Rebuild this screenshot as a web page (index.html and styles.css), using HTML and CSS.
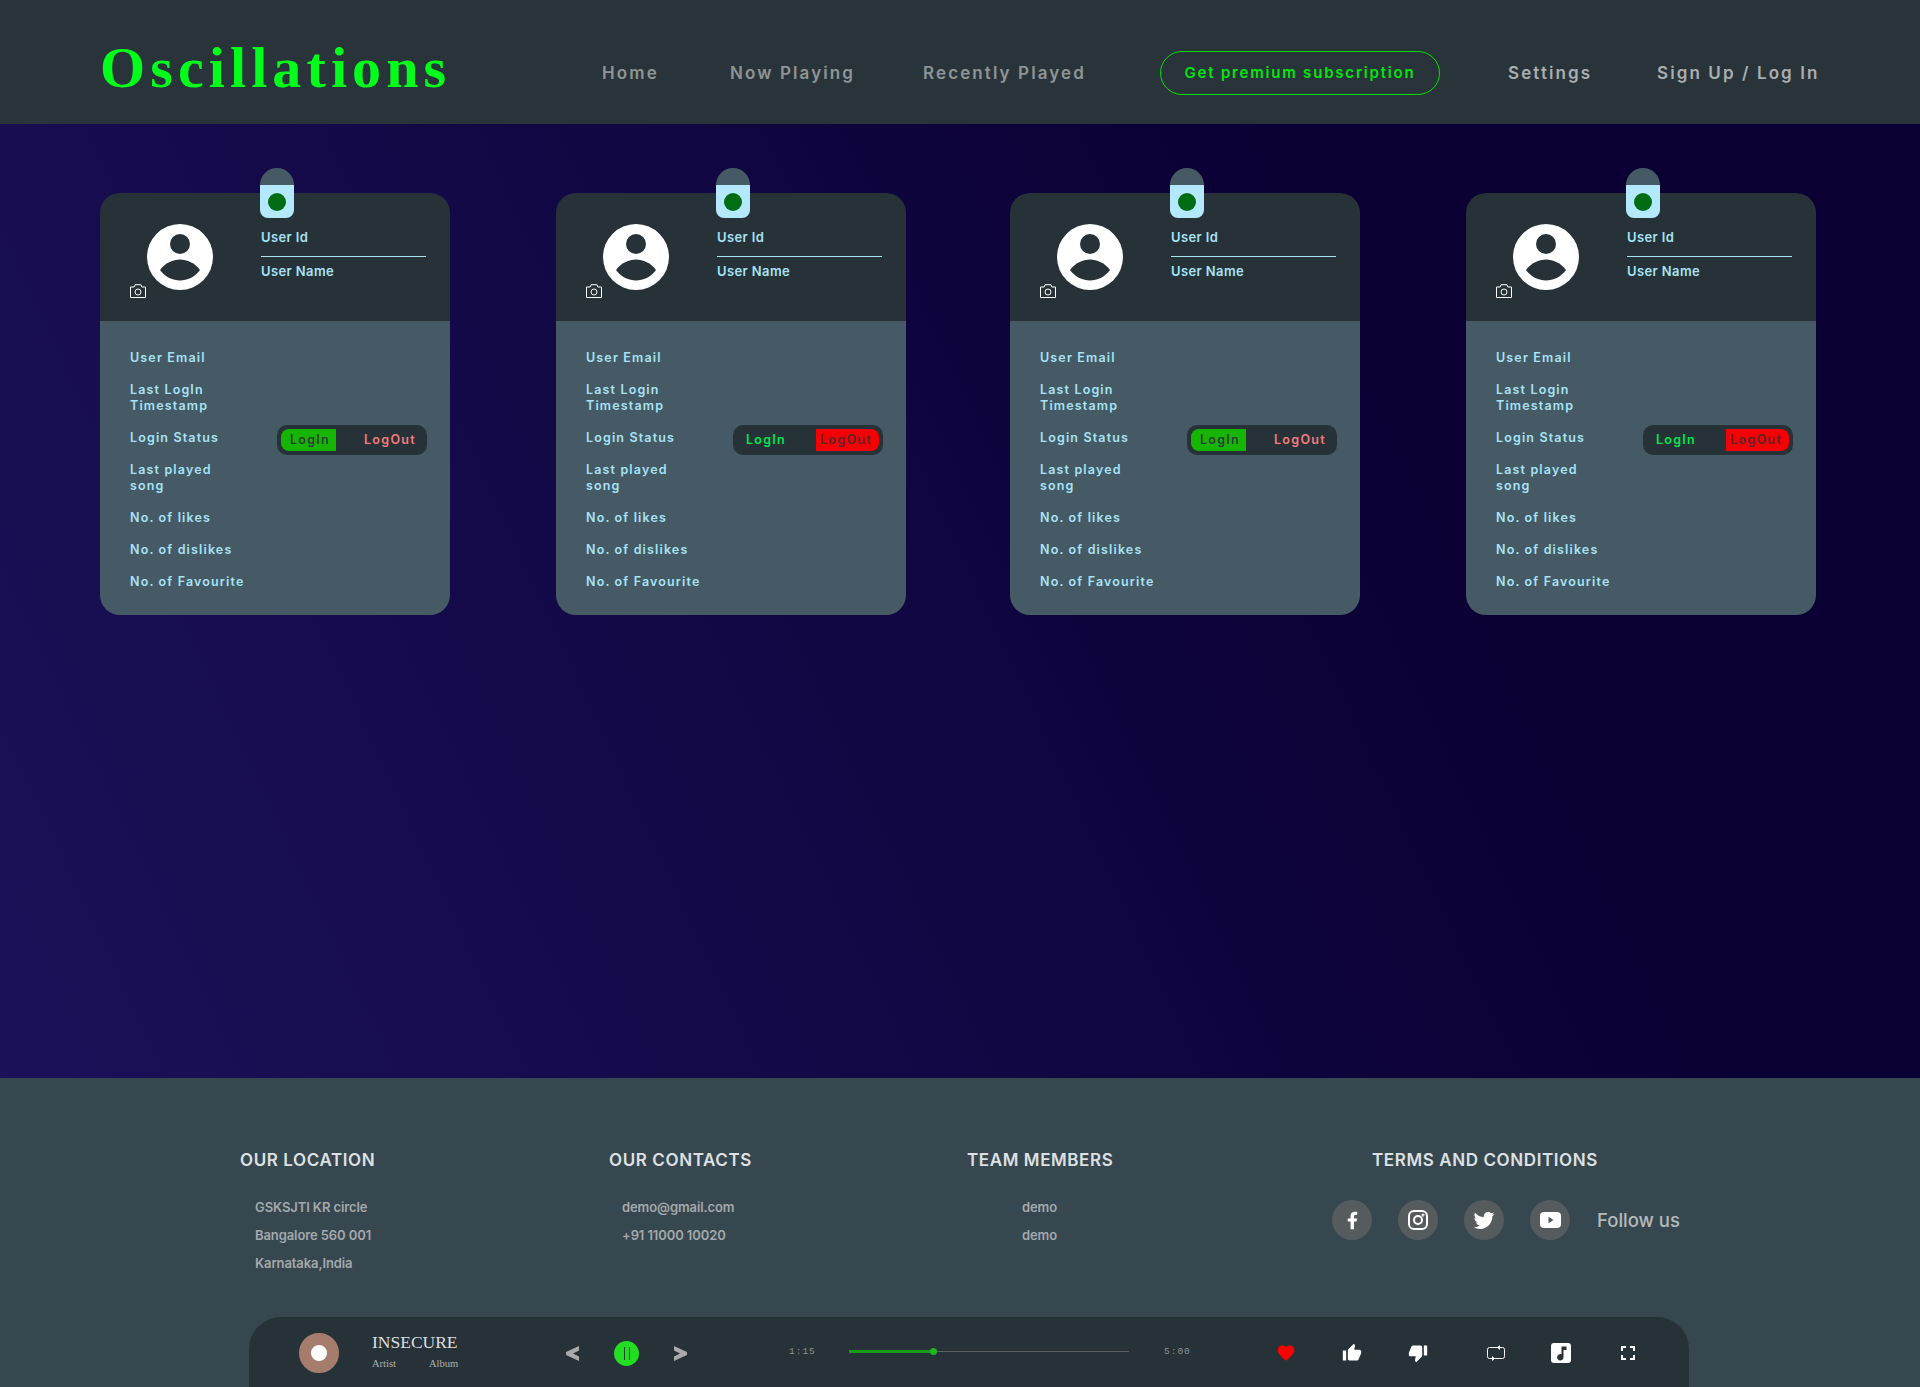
FILE: index.html
```html
<!DOCTYPE html>
<html>
<head>
    <meta charset="utf-8">
    <title>Oscillations</title>
    <link rel="stylesheet" href="styles.css">
</head>
<body>
    <svg class="sprites" width="0" height="0">
        <symbol id="avatar" viewBox="0 0 66 66">
            <circle cx="33" cy="33" r="33" fill="#fff"/>
            <circle cx="33" cy="20" r="10" fill="#263238"/>
            <path fill="#263238" d="M13 46C18 39 26 35.500 33 35.500S48 39 53 46C48 53 40 56.500 33 56.500S18 53 13 46z"/>
        </symbol>
        <symbol id="camera" viewBox="0 0 16 14">
            <path d="M.5 3h3.6l1-2.3h5.8l1 2.3h3.6v10.5H.5z" fill="none" stroke="#fff"/>
            <circle cx="8" cy="8" r="3" fill="none" stroke="#fff"/>
        </symbol>
    </svg>

    <div class="header">
        <div class="logo">Oscillations</div>
        <div class="nav">
            <a class="nav-home">Home</a>
            <a class="nav-now">Now Playing</a>
            <a class="nav-recent">Recently Played</a>
            <a class="premium">Get premium subscription</a>
            <a class="nav-settings light">Settings</a>
            <a class="nav-sign light">Sign Up / Log In</a>
        </div>
    </div>

    <div class="main">
        <div class="card">
            <div class="tab"><span class="tab-dot"></span></div>
            <div class="card-head">
                <div class="photo">
                    <svg class="avatar"><use href="#avatar"/></svg>
                    <svg class="camera"><use href="#camera"/></svg>
                </div>
                <div class="who">
                    <div class="who-id">User Id</div>
                    <div class="who-name">User Name</div>
                </div>
            </div>
            <div class="card-body">
                <div class="row">User Email</div>
                <div class="row">Last LogIn<br>Timestamp</div>
                <div class="row row-status">Login Status
                    <div class="toggle">
                        <span class="login on">LogIn</span>
                        <span class="logout">LogOut</span>
                    </div>
                </div>
                <div class="row">Last played<br>song</div>
                <div class="row">No. of likes</div>
                <div class="row">No. of dislikes</div>
                <div class="row">No. of Favourite</div>
            </div>
        </div>

        <div class="card">
            <div class="tab"><span class="tab-dot"></span></div>
            <div class="card-head">
                <div class="photo">
                    <svg class="avatar"><use href="#avatar"/></svg>
                    <svg class="camera"><use href="#camera"/></svg>
                </div>
                <div class="who">
                    <div class="who-id">User Id</div>
                    <div class="who-name">User Name</div>
                </div>
            </div>
            <div class="card-body">
                <div class="row">User Email</div>
                <div class="row">Last Login<br>Timestamp</div>
                <div class="row row-status">Login Status
                    <div class="toggle">
                        <span class="login">LogIn</span>
                        <span class="logout on">LogOut</span>
                    </div>
                </div>
                <div class="row">Last played<br>song</div>
                <div class="row">No. of likes</div>
                <div class="row">No. of dislikes</div>
                <div class="row">No. of Favourite</div>
            </div>
        </div>

        <div class="card">
            <div class="tab"><span class="tab-dot"></span></div>
            <div class="card-head">
                <div class="photo">
                    <svg class="avatar"><use href="#avatar"/></svg>
                    <svg class="camera"><use href="#camera"/></svg>
                </div>
                <div class="who">
                    <div class="who-id">User Id</div>
                    <div class="who-name">User Name</div>
                </div>
            </div>
            <div class="card-body">
                <div class="row">User Email</div>
                <div class="row">Last Login<br>Timestamp</div>
                <div class="row row-status">Login Status
                    <div class="toggle">
                        <span class="login on">LogIn</span>
                        <span class="logout">LogOut</span>
                    </div>
                </div>
                <div class="row">Last played<br>song</div>
                <div class="row">No. of likes</div>
                <div class="row">No. of dislikes</div>
                <div class="row">No. of Favourite</div>
            </div>
        </div>

        <div class="card">
            <div class="tab"><span class="tab-dot"></span></div>
            <div class="card-head">
                <div class="photo">
                    <svg class="avatar"><use href="#avatar"/></svg>
                    <svg class="camera"><use href="#camera"/></svg>
                </div>
                <div class="who">
                    <div class="who-id">User Id</div>
                    <div class="who-name">User Name</div>
                </div>
            </div>
            <div class="card-body">
                <div class="row">User Email</div>
                <div class="row">Last Login<br>Timestamp</div>
                <div class="row row-status">Login Status
                    <div class="toggle">
                        <span class="login">LogIn</span>
                        <span class="logout on">LogOut</span>
                    </div>
                </div>
                <div class="row">Last played<br>song</div>
                <div class="row">No. of likes</div>
                <div class="row">No. of dislikes</div>
                <div class="row">No. of Favourite</div>
            </div>
        </div>
    </div>

    <div class="footer">
        <div class="footer-cols">
            <div class="col">
                <h4>OUR LOCATION</h4>
                <ul class="list-location">
                    <li>GSKSJTI KR circle</li>
                    <li>Bangalore 560 001</li>
                    <li>Karnataka,India</li>
                </ul>
            </div>
            <div class="col">
                <h4>OUR CONTACTS</h4>
                <ul class="list-contacts">
                    <li>demo@gmail.com</li>
                    <li>+91 11000 10020</li>
                </ul>
            </div>
            <div class="col">
                <h4>TEAM MEMBERS</h4>
                <ul class="list-team">
                    <li>demo</li>
                    <li>demo</li>
                </ul>
            </div>
            <div class="col">
                <h4 class="terms">TERMS AND CONDITIONS</h4>
                <div class="social">
                    <span class="social-btn">
                        <svg width="11" height="19" viewBox="0 0 320 512"><path fill="#fff" d="M279.14 288l14.22-92.66h-88.91v-60.13c0-25.35 12.42-50.06 52.24-50.06h40.42V6.26S260.43 0 225.36 0c-73.22 0-121.08 44.38-121.08 124.72v70.62H22.89V288h81.39v224h100.17V288z"/></svg>
                    </span>
                    <span class="social-btn">
                        <svg width="20" height="20" viewBox="0 0 20 20" fill="none" stroke="#fff" stroke-width="2"><rect x="1" y="1" width="18" height="18" rx="5"/><circle cx="10" cy="10" r="4"/><circle cx="15" cy="5" r=".5"/></svg>
                    </span>
                    <span class="social-btn">
                        <svg width="24" height="24" viewBox="0 0 24 24"><path fill="#fff" d="M22.46 6c-.77.35-1.6.58-2.46.69.88-.53 1.56-1.37 1.88-2.38-.83.5-1.75.85-2.72 1.05C18.37 4.5 17.26 4 16 4c-2.35 0-4.27 1.92-4.27 4.29 0 .34.04.67.11.98C8.28 9.09 5.11 7.38 3 4.79c-.37.63-.58 1.37-.58 2.15 0 1.49.75 2.81 1.91 3.56-.71 0-1.37-.2-1.95-.5v.03c0 2.08 1.48 3.82 3.44 4.21a4.22 4.22 0 0 1-1.93.07 4.28 4.28 0 0 0 4 2.98 8.521 8.521 0 0 1-5.33 1.84c-.34 0-.68-.02-1.02-.06C3.44 20.29 5.7 21 8.12 21 16 21 20.33 14.46 20.33 8.79c0-.19 0-.37-.01-.56.84-.6 1.56-1.36 2.14-2.23z"/></svg>
                    </span>
                    <span class="social-btn">
                        <svg width="21" height="16" viewBox="0 0 21 16"><rect width="21" height="16" rx="4" fill="#fff"/><path d="M8.5 4.8v6.4l5-3.2z" fill="#555"/></svg>
                    </span>
                    <span class="follow">Follow us</span>
                </div>
            </div>
        </div>

        <div class="player">
            <div class="disc"></div>
            <div class="song">
                <div class="song-title">INSECURE</div>
                <div class="song-meta"><span>Artist</span><span>Album</span></div>
            </div>
            <div class="controls">
                <svg width="13" height="15" viewBox="0 0 13 15"><path fill="#aaa" d="M13 0v4.500L7 7.500l6 3V15L0 9V6z"/></svg>
                <span class="pause"><i></i><i></i></span>
                <svg width="13" height="15" viewBox="0 0 13 15"><path fill="#aaa" d="M0 0v4.500l6 3-6 3V15l13-6V6z"/></svg>
            </div>
            <div class="time">1:15</div>
            <div class="track"><div class="track-done" style="width: 30%"></div></div>
            <div class="time">5:00</div>
            <div class="actions">
                <svg class="act-heart" width="20" height="20" viewBox="0 0 24 24"><path fill="#f00" d="M12 21.35l-1.45-1.32C5.4 15.36 2 12.28 2 8.5 2 5.42 4.42 3 7.5 3c1.74 0 3.41.81 4.5 2.09C13.09 3.81 14.76 3 16.5 3 19.58 3 22 5.42 22 8.5c0 3.78-3.4 6.86-8.55 11.54L12 21.35z"/></svg>
                <svg class="act-up" width="20" height="20" viewBox="0 0 24 24"><path fill="#fff" d="M1 21h4V9H1v12zm22-11c0-1.1-.9-2-2-2h-6.31l.95-4.57.03-.32c0-.41-.17-.79-.44-1.06L14.17 1 7.59 7.59C7.22 7.95 7 8.45 7 9v10c0 1.1.9 2 2 2h9c.83 0 1.54-.5 1.84-1.22l3.02-7.05c.09-.23.14-.47.14-.73v-2z"/></svg>
                <svg class="act-down" width="20" height="20" viewBox="0 0 24 24"><path fill="#fff" d="M15 3H6c-.83 0-1.54.5-1.84 1.22l-3.02 7.05c-.09.23-.14.47-.14.73v2c0 1.1.9 2 2 2h6.31l-.95 4.57-.03.32c0 .41.17.79.44 1.06L9.83 23l6.59-6.59c.36-.36.58-.86.58-1.41V5c0-1.1-.9-2-2-2zm4 0v12h4V3h-4z"/></svg>
                <svg class="act-repeat" width="18" height="16" viewBox="0 0 18 16" fill="none" stroke="#fff" stroke-width="1"><rect x=".5" y="2.500" width="17" height="11" rx="2"/><path d="M13 0v5l-3-2.500zM5 11v5l3-2.500z" fill="#fff" stroke="none"/></svg>
                <svg class="act-music" width="20" height="20" viewBox="0 0 20 20"><rect width="20" height="20" rx="3" fill="#fff"/><path fill="#263238" d="M10.500 3.500v7.800a3.200 3.200 0 1 0 2 3V7h3V3.500z"/></svg>
                <svg class="act-full" width="18" height="18" viewBox="3 3 18 18"><path fill="#fff" d="M7 14H5v5h5v-2H7v-3zm-2-4h2V7h3V5H5v5zm12 7h-3v2h5v-5h-2v3zM14 5v2h3v3h2V5h-5z"/></svg>
            </div>
        </div>
    </div>
</body>
</html>
```

FILE: styles.css
```css
* {
    box-sizing: border-box;
}

html, body {
    margin: 0;
    height: 1387px;
    overflow: hidden;
}

body {
    display: flex;
    flex-direction: column;
    font-family: Inter, "Open Sans", sans-serif;
    background: #0a0033;
}

.sprites {
    display: none;
}

/* header */
.header {
    flex: none;
    height: 124px;
    display: flex;
    align-items: center;
    background: #29343a;
    padding: 20px 0 0 100px;
}

.logo {
    width: 502px;
    margin-top: -10px;
    color: #00ff1a;
    font-family: "Liberation Serif", serif;
    font-weight: 700;
    font-size: 58px;
    letter-spacing: 5.100px;
    white-space: nowrap;
}

.nav {
    display: flex;
    align-items: center;
    margin-top: 2px;
    color: #8f9496;
    font-size: 17px;
    font-weight: 600;
    letter-spacing: 2.100px;
    white-space: nowrap;
}

.nav-home { width: 128px; }
.nav-now { width: 193px; }
.nav-recent { width: 237px; }
.nav-settings { width: 149px; margin-left: 68px; }

.light {
    color: #a9aeb0;
}

.premium {
    width: 280px;
    height: 44px;
    line-height: 42px;
    text-align: center;
    border: 1px solid #00e000;
    border-radius: 22px;
    color: #00e60f;
    font-size: 15px;
    letter-spacing: 1.800px;
}

/* cards */
.main {
    flex: 1;
    display: flex;
    gap: 106px;
    align-items: flex-start;
    padding: 69px 0 0 100px;
    background: linear-gradient(65deg, #1b1159, #0a0033 75%);
}

.card {
    position: relative;
    width: 350px;
    border-radius: 20px;
}

.card:nth-child(3) {
    margin-left: -2px;
}

.tab {
    position: absolute;
    left: 160px;
    top: -25px;
    width: 34px;
    height: 50px;
    padding-top: 25px;
    border-radius: 17px 17px 8px 8px;
    background: linear-gradient(#455a64 17px, #b3e8fd 17px);
}

.tab-dot {
    display: block;
    width: 18px;
    height: 18px;
    margin-left: 8px;
    border-radius: 50%;
    background: #006d14;
}

.card-head {
    height: 128px;
    display: flex;
    padding: 31px 24px 0 47px;
    background: #263238;
    border-radius: 20px 20px 0 0;
}

.photo {
    position: relative;
    width: 114px;
}

.avatar {
    width: 66px;
    height: 66px;
    display: block;
}

.camera {
    position: absolute;
    left: -17px;
    top: 60px;
    width: 16px;
    height: 14px;
}

.who {
    flex: 1;
    color: #a6e3f7;
    font-size: 13px;
    font-weight: 600;
    letter-spacing: .4px;
}

.who-id {
    height: 33px;
    padding-top: 5px;
    border-bottom: 1px solid #a6e3f7;
}

.who-name {
    padding-top: 6px;
}

.card-body {
    padding: 29px 18px 25px 30px;
    display: flex;
    flex-direction: column;
    gap: 16px;
    background: #455a64;
    border-radius: 0 0 20px 20px;
    color: #a6e3f7;
    font-size: 12.500px;
    font-weight: 600;
    letter-spacing: 1.150px;
    line-height: 16px;
}

.row-status {
    display: flex;
    justify-content: space-between;
    align-items: center;
    height: 16px;
    white-space: nowrap;
}

.toggle {
    width: 150px;
    height: 30px;
    flex: none;
    margin: 4px 5px 0 0;
    padding: 4px;
    display: flex;
    justify-content: space-between;
    background: #263238;
    border-radius: 10px;
    font-size: 12.500px;
    letter-spacing: 1.300px;
    line-height: 22px;
    text-align: center;
}

.login {
    width: 55px;
    padding-left: 3px;
    color: #00e64d;
}

.logout {
    width: 63px;
    padding-right: 3px;
    color: #f47c7c;
}

.login.on {
    background: #16b600;
    color: #2b3c3c;
    border-radius: 8px 0 0 8px;
}

.logout.on {
    background: #f50000;
    color: #5a2530;
    border-radius: 0 8px 8px 0;
}

/* footer */
.footer {
    flex: none;
    height: 309px;
    display: flex;
    flex-direction: column;
    background: #37474f;
}

.footer-cols {
    flex: 1;
    display: grid;
    grid-template-columns: 369px 358px 365px auto;
    padding: 72px 0 0 240px;
}

.col h4 {
    margin: 0;
    color: #dde1e3;
    font-size: 17px;
    font-weight: 600;
    letter-spacing: .6px;
    line-height: 20px;
    white-space: nowrap;
}

.col ul {
    margin: 0;
    padding: 23px 0 0;
    list-style: none;
    color: #a3a9ac;
    font-size: 13px;
    font-weight: 600;
    letter-spacing: -.1px;
    line-height: 28px;
}

.list-location { padding-left: 15px !important; }
.list-contacts { padding-left: 13px !important; }
.list-team { padding-left: 55px !important; }

.col .terms {
    padding-left: 40px;
}

.social {
    display: flex;
    align-items: center;
    gap: 26px;
    margin-top: 30px;
}

.social-btn {
    width: 40px;
    height: 40px;
    display: flex;
    align-items: center;
    justify-content: center;
    border-radius: 50%;
    background: #565c5e;
}

.follow {
    margin-left: 1px;
    color: #b4babc;
    font-size: 18.500px;
    font-weight: 500;
    white-space: nowrap;
}

/* player */
.player {
    flex: none;
    width: 1440px;
    height: 70px;
    margin-left: 249px;
    padding: 16px 0 0 50px;
    display: flex;
    align-items: flex-start;
    background: #263238;
    border-radius: 32px 32px 0 0;
}

.disc {
    width: 40px;
    height: 40px;
    border: 12px solid #a67c6d;
    border-radius: 50%;
    background: #fff;
}

.song {
    width: 194px;
    margin-left: 33px;
    font-family: "Liberation Serif", serif;
}

.song-title {
    color: #dcdfe0;
    font-size: 17.500px;
    line-height: 18px;
}

.song-meta {
    display: flex;
    gap: 33px;
    margin-top: 7px;
    color: #aab0b2;
    font-size: 10.500px;
    line-height: 12px;
}

.controls {
    width: 121px;
    height: 40px;
    display: flex;
    align-items: center;
    justify-content: space-between;
}

.pause {
    width: 25px;
    height: 25px;
    display: flex;
    align-items: center;
    justify-content: center;
    gap: 4px;
    border-radius: 50%;
    background: #22dd22;
}

.pause i {
    width: 1px;
    height: 13px;
    background: #1d4a2a;
}

.time {
    width: 60px;
    margin-left: 102px;
    height: 38px;
    line-height: 38px;
    color: #8a9092;
    font-family: "Liberation Mono", monospace;
    font-size: 9.500px;
    letter-spacing: 1px;
}

.track {
    width: 280px;
    height: 1px;
    margin-top: 18px;
    background: #5c6062;
}

.track-done {
    position: relative;
    height: 3px;
    margin-top: -1px;
    background: #1a9a1a;
}

.track-done::after {
    content: "";
    position: absolute;
    right: -4px;
    top: -2px;
    width: 7px;
    height: 7px;
    border-radius: 50%;
    background: #1fb81f;
}

.track + .time {
    margin-left: 35px;
}

.actions {
    height: 40px;
    margin-left: 52px;
    display: flex;
    align-items: center;
}

.act-up { margin-left: 46px; }
.act-down { margin-left: 46px; }
.act-repeat { margin-left: 59px; }
.act-music { margin-left: 46px; }
.act-full { margin-left: 48px; }
```
